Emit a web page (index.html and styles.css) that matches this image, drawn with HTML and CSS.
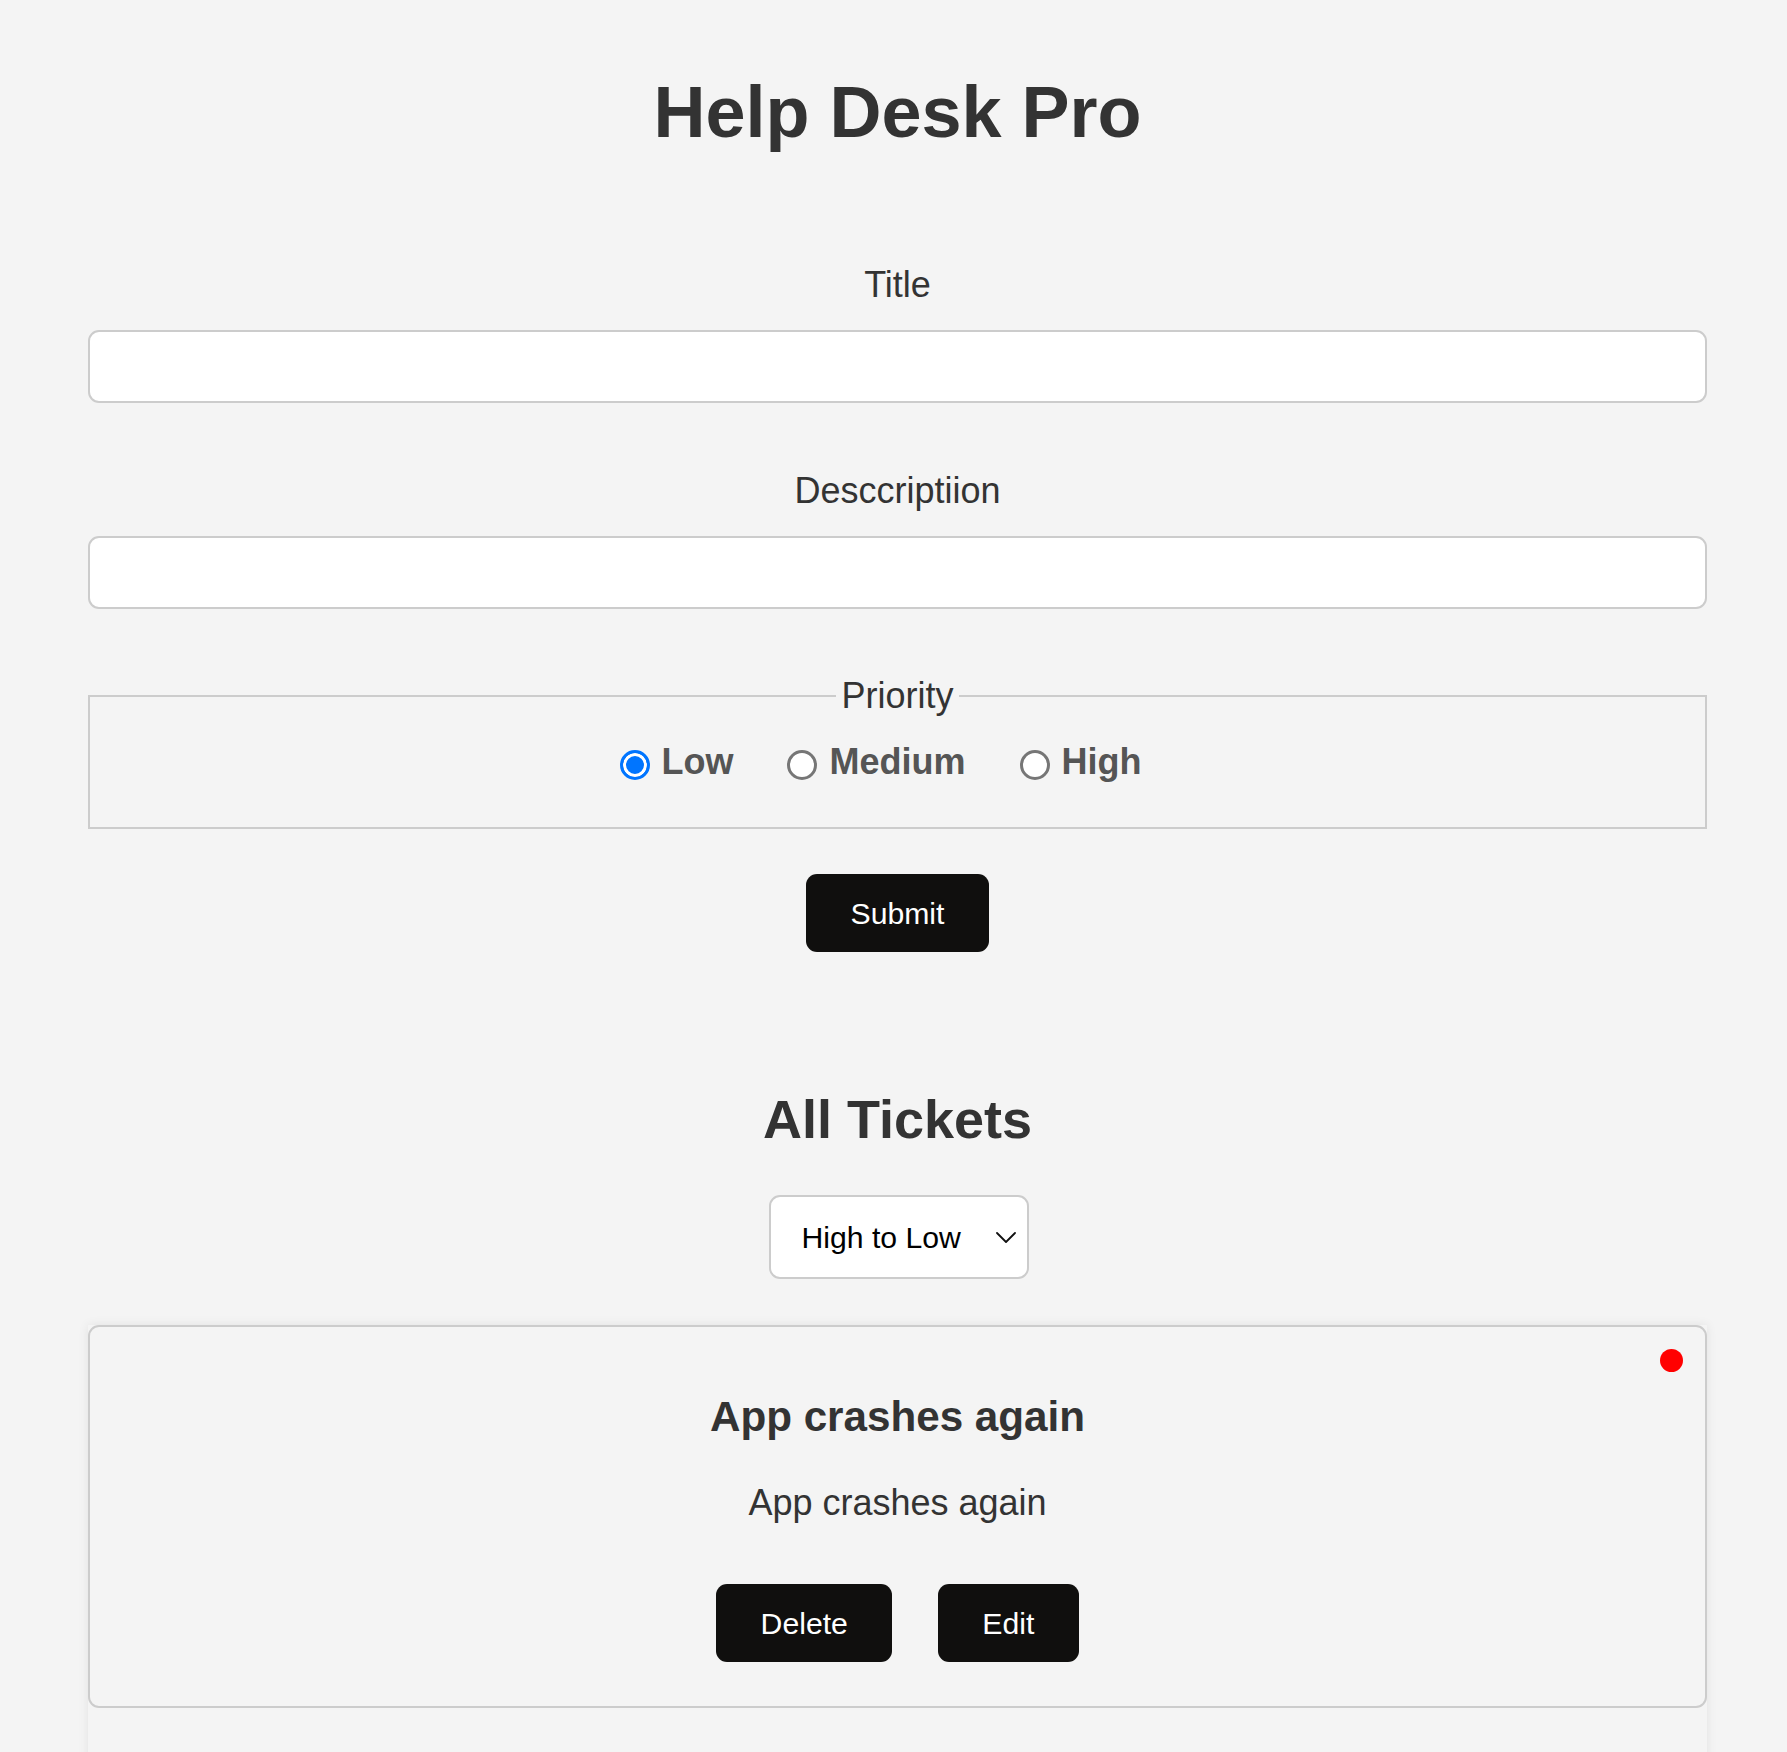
FILE: index.html
```html
<!DOCTYPE html>
<html lang="en">
<head>
<meta charset="utf-8">
<title>Help Desk Pro</title>
<link rel="stylesheet" href="styles.css">
</head>
<body>
<div class="app">
  <h1 class="app-title">Help Desk Pro</h1>
  <form class="ticket-form">
    <label class="field-label" for="title">Title</label>
    <input class="field-input" id="title" type="text">
    <label class="field-label field-label-next" for="desc">Desccriptiion</label>
    <input class="field-input" id="desc" type="text">
    <fieldset class="priority">
      <legend class="priority-legend">Priority</legend>
      <div class="priority-options">
        <label class="priority-option"><input class="radio" type="radio" name="priority" value="low" checked><span>Low</span></label>
        <label class="priority-option"><input class="radio" type="radio" name="priority" value="medium"><span>Medium</span></label>
        <label class="priority-option"><input class="radio" type="radio" name="priority" value="high"><span>High</span></label>
      </div>
    </fieldset>
    <div class="form-actions">
      <button class="btn" type="submit">Submit</button>
    </div>
  </form>

  <h2 class="tickets-title">All Tickets</h2>
  <div class="sort-row">
    <div class="sort">
      <select class="sort-select">
        <option>High to Low</option>
        <option>Low to High</option>
      </select>
      <svg class="sort-chevron" viewBox="0 0 20 11" width="20" height="11" aria-hidden="true">
        <path d="M1 1 L10 10 L19 1" fill="none" stroke="#111" stroke-width="1.8" stroke-linecap="round" stroke-linejoin="round"/>
      </svg>
    </div>
  </div>

  <div class="ticket-list">
    <div class="ticket-card">
      <span class="priority-dot"></span>
      <h3 class="ticket-title">App crashes again</h3>
      <p class="ticket-desc">App crashes again</p>
      <div class="ticket-actions">
        <button class="btn" type="button">Delete</button>
        <button class="btn" type="button">Edit</button>
      </div>
    </div>
  </div>
</div>
</body>
</html>
```

FILE: styles.css
```css
* {
  box-sizing: border-box;
}

html, body {
  margin: 0;
  padding: 0;
}

body {
  background: #f4f4f4;
  color: #333;
  font-family: "Liberation Sans", Arial, sans-serif;
}

.app {
  margin: 0 80px 0 88px;
  padding-bottom: 0;
}

.app-title {
  margin: 70px 0 0;
  font-size: 72px;
  line-height: 84px;
  font-weight: bold;
  text-align: center;
  color: #333;
}

.ticket-form {
  display: block;
  margin: 0;
}

.field-label {
  display: block;
  margin-top: 110px;
  font-size: 36px;
  line-height: 42px;
  text-align: center;
  color: #333;
}

.field-label-next {
  margin-top: 67px;
}

.field-input {
  display: block;
  width: 100%;
  height: 73px;
  margin: 24px 0 0;
  padding: 0 22px;
  border: 2px solid #cccccc;
  border-radius: 11px;
  background: #fff;
  font-family: inherit;
  font-size: 30px;
  color: #333;
  outline: none;
}

.priority {
  margin: 66px 0 0;
  padding: 24px 20px 44px;
  border: 2px solid #cccccc;
  min-width: 0;
}

.priority-legend {
  margin: 0 auto;
  padding: 0 5px;
  font-size: 36px;
  line-height: 42px;
  color: #333;
}

.priority-options {
  display: flex;
  justify-content: center;
  align-items: center;
  height: 42px;
}

.priority-option {
  display: flex;
  align-items: center;
  gap: 12px;
  margin-right: 44px;
  font-size: 36px;
  line-height: 42px;
  font-weight: bold;
  color: #555;
}

.radio {
  appearance: none;
  -webkit-appearance: none;
  width: 30px;
  height: 30px;
  margin: 5px 0 0 10px;
  border: 3px solid #767676;
  border-radius: 50%;
  background: #fff;
  flex: none;
}

.radio:checked {
  border-color: #0075ff;
  background: #0075ff;
  box-shadow: inset 0 0 0 3px #fff;
}

.form-actions {
  display: flex;
  justify-content: center;
  margin-top: 45px;
}

.btn {
  height: 78px;
  padding: 0 44.5px;
  border: none;
  border-radius: 11px;
  background: #100f0e;
  color: #fff;
  font-family: "Liberation Sans", Arial, sans-serif;
  font-size: 30.2px;
  line-height: 35px;
  cursor: pointer;
}

.tickets-title {
  margin: 136px 0 0;
  font-size: 54px;
  line-height: 63px;
  font-weight: bold;
  text-align: center;
  color: #333;
}

.sort-row {
  display: flex;
  justify-content: center;
  margin-top: 44px;
  padding-left: 2px;
}

.sort {
  position: relative;
  width: 260px;
  height: 84px;
}

.sort-select {
  appearance: none;
  -webkit-appearance: none;
  width: 100%;
  height: 100%;
  margin: 0;
  padding: 0 40px 0 31px;
  border: 2px solid #cccccc;
  border-radius: 11px;
  background: #fff;
  color: #000;
  font-family: "Liberation Sans", Arial, sans-serif;
  font-size: 30.2px;
  outline: none;
}

.sort-chevron {
  position: absolute;
  right: 13px;
  top: 37px;
  width: 20px;
  height: 11px;
  pointer-events: none;
}

.ticket-list {
  margin-top: 46px;
  padding-bottom: 80px;
  box-shadow: 0 0 10px rgba(0, 0, 0, 0.08);
}

.ticket-card {
  position: relative;
  padding: 65px 20px 44px;
  border: 2px solid #cccccc;
  border-radius: 11px;
  text-align: center;
}

.priority-dot {
  position: absolute;
  top: 22px;
  right: 22px;
  width: 23px;
  height: 23px;
  border-radius: 50%;
  background: #ff0000;
}

.ticket-title {
  margin: 0;
  font-size: 42.2px;
  line-height: 49px;
  font-weight: bold;
  color: #333;
}

.ticket-desc {
  margin: 41px 0 0;
  font-size: 36px;
  line-height: 42px;
  color: #333;
}

.ticket-actions {
  display: flex;
  justify-content: center;
  gap: 45.5px;
  margin-top: 60px;
}
```
